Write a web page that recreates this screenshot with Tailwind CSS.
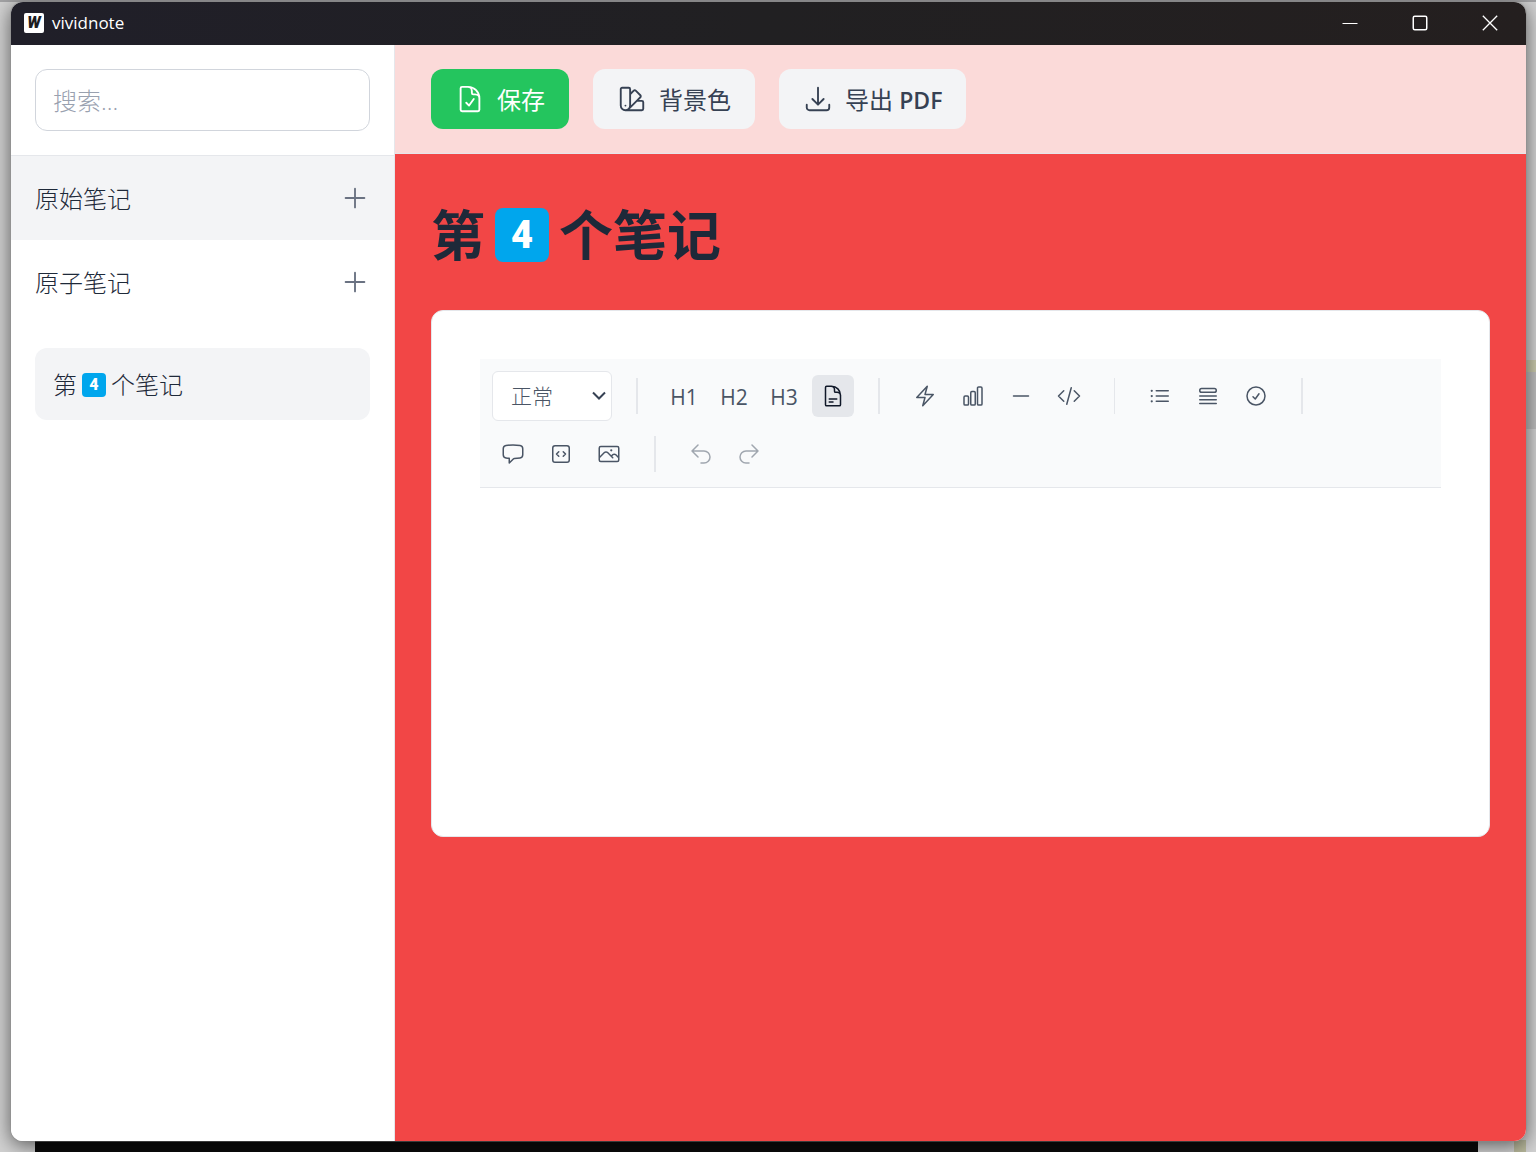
<!DOCTYPE html>
<html lang="zh-CN">
<head>
<meta charset="utf-8">
<meta name="viewport" content="width=device-width, initial-scale=1">
<title>vividnote</title>
<script src="https://cdn.jsdelivr.net/npm/@tailwindcss/browser@4"></script>
</head>
<body class="relative flex min-h-screen flex-col overflow-x-hidden bg-[#d2d2d2] pt-0.5 pr-2.5 pl-[11px] font-['Open_Sans','Noto_Sans_CJK_SC',sans-serif] text-gray-800">
  <!-- desktop behind the window -->
  <div aria-hidden="true" class="absolute inset-x-0 top-0 h-0.5 bg-[#a3a3a5]"></div>
  <div aria-hidden="true" class="absolute top-[360px] right-0 h-3 w-2.5 bg-[#c9c9ac]"></div>
  <div aria-hidden="true" class="absolute top-[372px] right-0 h-[57px] w-2.5 bg-[#bebebe]"></div>
  <div aria-hidden="true" class="absolute right-2.5 bottom-0 h-3 w-3 bg-[#b9b99c]"></div>
  <div aria-hidden="true" class="absolute right-[58px] bottom-0 left-[35px] h-3 bg-[#0b0b0b]"></div>

  <div class="relative mb-[11px] flex flex-1 flex-col overflow-hidden rounded-xl bg-white shadow-[0_0_0_1px_#8b8b8b66,0_4px_20px_#00000099]">
    <header class="flex h-[43px] shrink-0 items-center justify-between bg-linear-to-r from-[#201f29] via-[#212022] to-[#241f1f] pr-px pb-0.5 text-white">
      <div class="flex items-center gap-2 pl-[13px]">
        <span class="flex h-5 w-5 items-center justify-center rounded-xs bg-white font-['Roboto',sans-serif] text-base leading-5 font-black text-[#1c1c1f] italic">W</span>
        <span class="text-[17px] leading-6">vividnote</span>
      </div>
      <div class="flex h-full">
        <button aria-label="最小化" class="flex w-[70px] items-center justify-center"><svg class="h-4 w-4" viewBox="0 0 16 16" fill="none" stroke="currentColor"><path d="M.5 8.5h15"/></svg></button>
        <button aria-label="最大化" class="flex w-[70px] items-center justify-center"><svg class="h-4 w-4" viewBox="0 0 16 16" fill="none" stroke="currentColor" stroke-width="1.5"><rect x="1.25" y="1.25" width="13.5" height="13.5" rx="1.5"/></svg></button>
        <button aria-label="关闭" class="flex w-[70px] items-center justify-center"><svg class="h-4 w-4" viewBox="0 0 16 16" fill="none" stroke="currentColor" stroke-width="1.3"><path d="M.8.8l14.4 14.4M15.2.8L.8 15.2"/></svg></button>
      </div>
    </header>

    <div class="flex flex-1">
      <aside class="w-96 shrink-0 border-r border-gray-200 bg-white text-2xl font-light">
        <div class="border-b border-gray-200 p-6">
          <input type="search" aria-label="搜索" placeholder="搜索..." class="block h-[62px] w-full appearance-none rounded-xl border border-gray-300 px-[17px] placeholder:text-gray-400">
        </div>
        <div class="flex h-[84px] items-center justify-between bg-gray-100 px-6">
          <h2 class="pt-0.5">原始笔记</h2>
          <button aria-label="新建原始笔记" class="text-gray-500"><svg class="h-[30px] w-[30px]" viewBox="0 0 24 24" fill="none" stroke="currentColor" stroke-width="1.5" stroke-linecap="round"><path d="M12 4.5v15m7.5-7.5h-15"/></svg></button>
        </div>
        <div class="flex h-[84px] items-center justify-between px-6">
          <h2 class="pt-0.5">原子笔记</h2>
          <button aria-label="新建原子笔记" class="text-gray-500"><svg class="h-[30px] w-[30px]" viewBox="0 0 24 24" fill="none" stroke="currentColor" stroke-width="1.5" stroke-linecap="round"><path d="M12 4.5v15m7.5-7.5h-15"/></svg></button>
        </div>
        <div class="p-6">
          <a href="#note" class="flex h-[72px] items-center rounded-xl bg-gray-100 px-[18px] pt-0.5">第<span class="mx-[5px] flex h-6 w-6 items-center justify-center rounded-sm bg-[#00a6ed] font-['Roboto',sans-serif] text-base leading-6 font-black text-white">4</span>个笔记</a>
        </div>
      </aside>

      <main class="flex min-w-0 flex-1 flex-col bg-[#f24646]">
        <div class="flex gap-6 border-b border-gray-200 bg-[#fbdad9] px-9 py-6 text-2xl">
          <button class="flex h-[60px] items-center gap-3 rounded-xl bg-[#24c55e] px-6 text-white"><svg class="h-[30px] w-[30px]" viewBox="0 0 24 24" fill="none" stroke="currentColor" stroke-width="1.5" stroke-linecap="round" stroke-linejoin="round"><path d="M10.125 2.25h-4.5c-.621 0-1.125.504-1.125 1.125v17.25c0 .621.504 1.125 1.125 1.125h12.75c.621 0 1.125-.504 1.125-1.125v-9M10.125 2.25h.375a9 9 0 019 9v.375M10.125 2.25A3.375 3.375 0 0113.5 5.625v1.5c0 .621.504 1.125 1.125 1.125h1.5a3.375 3.375 0 013.375 3.375M9 15l2.25 2.25L15 12"/></svg><span class="pt-0.5">保存</span></button>
          <button class="flex h-[60px] items-center gap-3 rounded-xl bg-gray-100 px-6 text-gray-700"><svg class="h-[30px] w-[30px]" viewBox="0 0 24 24" fill="none" stroke="currentColor" stroke-width="1.5" stroke-linecap="round" stroke-linejoin="round"><path d="M4.098 19.902a3.75 3.75 0 005.304 0l6.401-6.402M6.75 21A3.75 3.75 0 013 17.25V4.125C3 3.504 3.504 3 4.125 3h5.25c.621 0 1.125.504 1.125 1.125v4.072M6.75 21a3.75 3.75 0 003.75-3.75V8.197M6.75 21h13.125c.621 0 1.125-.504 1.125-1.125v-5.25c0-.621-.504-1.125-1.125-1.125h-4.072M10.5 8.197l2.88-2.88c.438-.439 1.15-.439 1.59 0l3.712 3.713c.44.44.44 1.152 0 1.59l-2.879 2.88M6.75 17.25h.008v.008H6.75v-.008z"/></svg><span class="pt-0.5">背景色</span></button>
          <button class="flex h-[60px] items-center gap-3 rounded-xl bg-gray-100 px-6 text-gray-700"><svg class="h-[30px] w-[30px]" viewBox="0 0 24 24" fill="none" stroke="currentColor" stroke-width="1.5" stroke-linecap="round" stroke-linejoin="round"><path d="M3 16.5v2.25A2.25 2.25 0 005.25 21h13.5A2.25 2.25 0 0021 18.75V16.5M16.5 12L12 16.5m0 0L7.5 12m4.5 4.5V3"/></svg><span class="pt-0.5">导出 <span class="text-[23px] font-semibold">PDF</span></span></button>
        </div>

        <article id="note" class="flex flex-col gap-[30px] p-9">
          <h1 class="flex h-[90px] items-center text-[54px] leading-[90px] font-bold">第<span class="mx-2.5 flex h-[54px] w-[54px] items-center justify-center rounded-lg bg-[#00a6ed] font-['Roboto',sans-serif] text-[38px] leading-[54px] font-black text-white">4</span>个笔记</h1>

          <section class="min-h-[527px] rounded-xl border border-gray-200 bg-white p-12">
            <div role="toolbar" aria-label="格式" class="flex flex-wrap items-center gap-x-6 gap-y-3 border-b border-gray-200 bg-gray-50 p-3 text-[21px] text-gray-600">
              <div class="relative">
                <select aria-label="段落样式" class="block h-[50px] w-[120px] appearance-none rounded-md border border-gray-200 bg-white pt-0.5 pl-[18px] font-light"><option>正常</option></select>
                <svg class="pointer-events-none absolute top-[17px] right-[5px] h-4 w-4 text-gray-700" viewBox="0 0 16 16" fill="none" stroke="currentColor" stroke-width="2"><path d="M2 4.5l6 6 6-6"/></svg>
              </div>
              <span class="h-9 w-0.5 bg-gray-200"></span>
              <div class="flex items-center gap-1.5">
                <button class="h-[42px] w-11 pt-1">H1</button>
                <button class="h-[42px] w-11 pt-1">H2</button>
                <button class="h-[42px] w-11 pt-1">H3</button>
                <button aria-label="正文" aria-pressed="true" class="rounded-md bg-gray-200 p-[9px] text-gray-900"><svg class="h-6 w-6" viewBox="0 0 24 24" fill="none" stroke="currentColor" stroke-width="1.5" stroke-linecap="round" stroke-linejoin="round"><path d="M19.5 14.25v-2.625a3.375 3.375 0 00-3.375-3.375h-1.5A1.125 1.125 0 0113.5 7.125v-1.5a3.375 3.375 0 00-3.375-3.375H8.25m0 12.75h7.5m-7.5 3H12M10.5 2.25H5.625c-.621 0-1.125.504-1.125 1.125v17.25c0 .621.504 1.125 1.125 1.125h12.75c.621 0 1.125-.504 1.125-1.125V11.25a9 9 0 00-9-9z"/></svg></button>
              </div>
              <span class="h-9 w-0.5 bg-gray-200"></span>
              <div class="flex items-center gap-1.5">
                <button aria-label="加粗" class="p-[9px]"><svg class="h-6 w-6" viewBox="0 0 24 24" fill="none" stroke="currentColor" stroke-width="1.5" stroke-linecap="round" stroke-linejoin="round"><path d="M3.75 13.5l10.5-11.25L12 10.5h8.25L9.75 21.75 12 13.5H3.75z"/></svg></button>
                <button aria-label="斜体" class="p-[9px]"><svg class="h-6 w-6" viewBox="0 0 24 24" fill="none" stroke="currentColor" stroke-width="1.5" stroke-linecap="round" stroke-linejoin="round"><path d="M3 13.125C3 12.504 3.504 12 4.125 12h2.25c.621 0 1.125.504 1.125 1.125v6.75C7.5 20.496 6.996 21 6.375 21h-2.25A1.125 1.125 0 013 19.875v-6.75zM9.75 8.625c0-.621.504-1.125 1.125-1.125h2.25c.621 0 1.125.504 1.125 1.125v11.25c0 .621-.504 1.125-1.125 1.125h-2.25a1.125 1.125 0 01-1.125-1.125V8.625zM16.5 4.125c0-.621.504-1.125 1.125-1.125h2.25C20.496 3 21 3.504 21 4.125v15.75c0 .621-.504 1.125-1.125 1.125h-2.25a1.125 1.125 0 01-1.125-1.125V4.125z"/></svg></button>
                <button aria-label="删除线" class="p-[9px]"><svg class="h-6 w-6" viewBox="0 0 24 24" fill="none" stroke="currentColor" stroke-width="1.5" stroke-linecap="round"><path d="M19.5 12h-15"/></svg></button>
                <button aria-label="行内代码" class="p-[9px]"><svg class="h-6 w-6" viewBox="0 0 24 24" fill="none" stroke="currentColor" stroke-width="1.5" stroke-linecap="round" stroke-linejoin="round"><path d="M17.25 6.75L22.5 12l-5.25 5.25m-10.5 0L1.5 12l5.25-5.25m7.5-3l-4.5 16.5"/></svg></button>
              </div>
              <span class="h-9 w-px bg-gray-200"></span>
              <div class="flex items-center gap-1.5">
                <button aria-label="无序列表" class="p-[9px]"><svg class="h-6 w-6" viewBox="0 0 24 24" fill="none" stroke="currentColor" stroke-width="1.5" stroke-linecap="round" stroke-linejoin="round"><path d="M8.25 6.75h12M8.25 12h12m-12 5.25h12M3.75 6.75h.007v.008H3.75V6.75zm.375 0a.375.375 0 11-.75 0 .375.375 0 01.75 0zM3.75 12h.007v.008H3.75V12zm.375 0a.375.375 0 11-.75 0 .375.375 0 01.75 0zm-.375 5.25h.007v.008H3.75v-.008zm.375 0a.375.375 0 11-.75 0 .375.375 0 01.75 0z"/></svg></button>
                <button aria-label="有序列表" class="p-[9px]"><svg class="h-6 w-6" viewBox="0 0 24 24" fill="none" stroke="currentColor" stroke-width="1.5" stroke-linecap="round" stroke-linejoin="round"><path d="M3.75 12h16.5m-16.5 3.75h16.5M3.75 19.5h16.5M5.625 4.5h12.75a1.875 1.875 0 010 3.75H5.625a1.875 1.875 0 010-3.75z"/></svg></button>
                <button aria-label="任务列表" class="p-[9px]"><svg class="h-6 w-6" viewBox="0 0 24 24" fill="none" stroke="currentColor" stroke-width="1.5" stroke-linecap="round" stroke-linejoin="round"><path d="M9 12.75L11.25 15 15 9.75M21 12a9 9 0 11-18 0 9 9 0 0118 0z"/></svg></button>
              </div>
              <span class="h-9 w-0.5 bg-gray-200"></span>
              <div class="flex items-center gap-1.5">
                <button aria-label="引用" class="p-[9px]"><svg class="h-6 w-6" viewBox="0 0 24 24" fill="none" stroke="currentColor" stroke-width="1.5" stroke-linecap="round" stroke-linejoin="round"><path d="M2.25 12.76c0 1.6 1.123 2.994 2.707 3.227 1.087.16 2.185.283 3.293.369V21l4.076-4.076a1.526 1.526 0 011.037-.443 48.282 48.282 0 005.68-.494c1.584-.233 2.707-1.626 2.707-3.228V6.741c0-1.602-1.123-2.995-2.707-3.228A48.394 48.394 0 0012 3c-2.392 0-4.744.175-7.043.513C3.373 3.746 2.25 5.14 2.25 6.741v6.018z"/></svg></button>
                <button aria-label="代码块" class="p-[9px]"><svg class="h-6 w-6" viewBox="0 0 24 24" fill="none" stroke="currentColor" stroke-width="1.5" stroke-linecap="round" stroke-linejoin="round"><path d="M14.25 9.75L16.5 12l-2.25 2.25m-4.5 0L7.5 12l2.25-2.25M6 20.25h12A2.25 2.25 0 0020.25 18V6A2.25 2.25 0 0018 3.75H6A2.25 2.25 0 003.75 6v12A2.25 2.25 0 006 20.25z"/></svg></button>
                <button aria-label="图片" class="p-[9px]"><svg class="h-6 w-6" viewBox="0 0 24 24" fill="none" stroke="currentColor" stroke-width="1.5" stroke-linecap="round" stroke-linejoin="round"><path d="M2.25 15.75l5.159-5.159a2.25 2.25 0 013.182 0l5.159 5.159m-1.5-1.5l1.409-1.409a2.25 2.25 0 013.182 0l2.909 2.909m-18 3.75h16.5a1.5 1.5 0 001.5-1.5V6a1.5 1.5 0 00-1.5-1.5H3.75A1.5 1.5 0 002.25 6v12a1.5 1.5 0 001.5 1.5zm10.5-11.25h.008v.008h-.008V8.25zm.375 0a.375.375 0 11-.75 0 .375.375 0 01.75 0z"/></svg></button>
              </div>
              <span class="h-9 w-0.5 bg-gray-200"></span>
              <div class="flex items-center gap-1.5">
                <button disabled aria-label="撤销" class="p-[9px] opacity-50"><svg class="h-6 w-6" viewBox="0 0 24 24" fill="none" stroke="currentColor" stroke-width="1.5" stroke-linecap="round" stroke-linejoin="round"><path d="M9 15L3 9m0 0l6-6M3 9h12a6 6 0 010 12h-3"/></svg></button>
                <button disabled aria-label="重做" class="p-[9px] opacity-50"><svg class="h-6 w-6" viewBox="0 0 24 24" fill="none" stroke="currentColor" stroke-width="1.5" stroke-linecap="round" stroke-linejoin="round"><path d="M15 15l6-6m0 0l-6-6m6 6H9a6 6 0 000 12h3"/></svg></button>
              </div>
            </div>
            <div contenteditable="true" role="textbox" aria-label="笔记正文" class="min-h-40 p-6 outline-none"></div>
          </section>
        </article>
      </main>
    </div>
  </div>
</body>
</html>
